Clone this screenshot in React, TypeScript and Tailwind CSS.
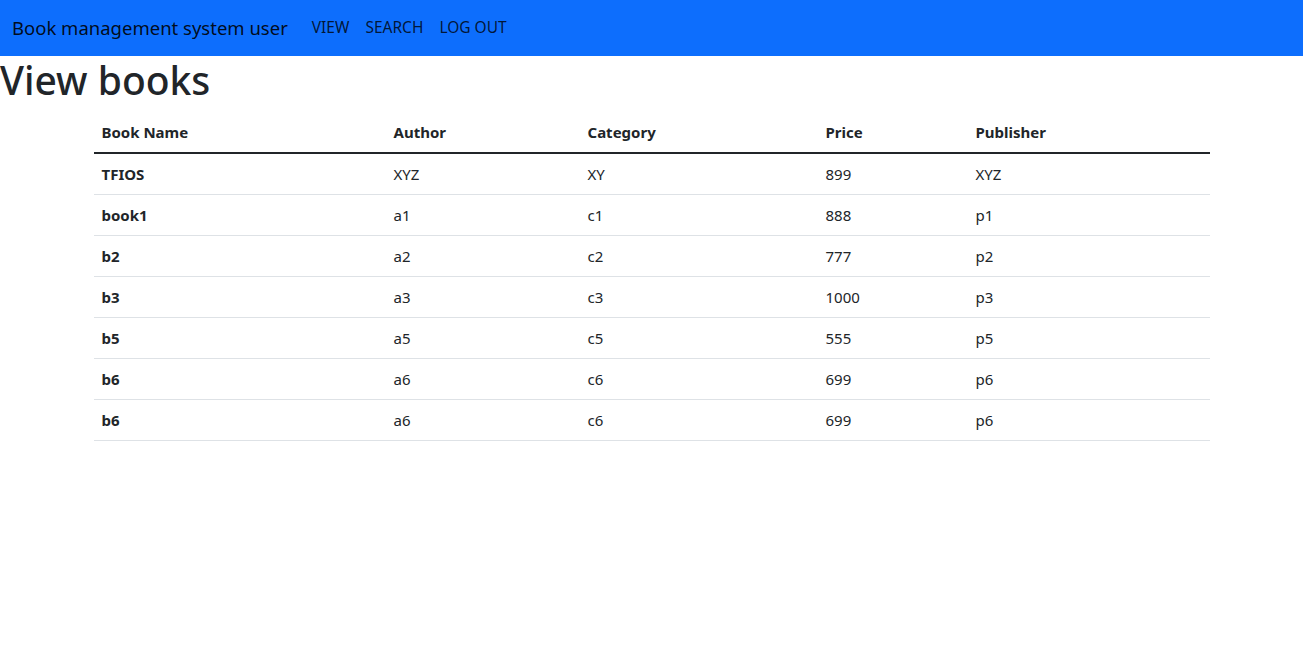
import React from 'react';

type Book = {
  name: string;
  author: string;
  category: string;
  price: string;
  publisher: string;
};

const books: Book[] = [
  { name: 'TFIOS', author: 'XYZ', category: 'XY', price: '899', publisher: 'XYZ' },
  { name: 'book1', author: 'a1', category: 'c1', price: '888', publisher: 'p1' },
  { name: 'b2', author: 'a2', category: 'c2', price: '777', publisher: 'p2' },
  { name: 'b3', author: 'a3', category: 'c3', price: '1000', publisher: 'p3' },
  { name: 'b5', author: 'a5', category: 'c5', price: '555', publisher: 'p5' },
  { name: 'b6', author: 'a6', category: 'c6', price: '699', publisher: 'p6' },
  { name: 'b6', author: 'a6', category: 'c6', price: '699', publisher: 'p6' },
];

const App: React.FC = () => {
  return (
    <div className="min-h-screen bg-white text-[#212529] font-['Noto_Sans',sans-serif] text-[15px]">
      {/* Navbar */}
      <nav className="h-14 bg-[#0d6efd] flex items-center px-3">
        <span className="text-[18.5px] text-black/90 mr-4 leading-[30px]">Book management system user</span>
        <ul className="flex items-center">
          {['VIEW', 'SEARCH', 'LOG OUT'].map((item) => (
            <li key={item}>
              <a href="#" className="block px-2 py-2 text-[15.5px] text-black/80">
                {item}
              </a>
            </li>
          ))}
        </ul>
      </nav>

      <h1 className="text-[39px] font-medium leading-[48px] mb-2">View books</h1>

      {/* Table */}
      <div className="w-[1116px] mx-auto">
        <table className="w-full table-fixed border-collapse">
          <thead>
            <tr className="border-b-2 border-[#212529]">
              <th className="w-[292px] text-left font-bold p-2 leading-6">Book Name</th>
              <th className="w-[194px] text-left font-bold p-2 leading-6">Author</th>
              <th className="w-[238px] text-left font-bold p-2 leading-6">Category</th>
              <th className="w-[150px] text-left font-bold p-2 leading-6">Price</th>
              <th className="text-left font-bold p-2 leading-6">Publisher</th>
            </tr>
          </thead>
          <tbody>
            {books.map((b, i) => (
              <tr key={i} className="border-b border-[#dee2e6]">
                <td className="p-2 leading-6 font-bold">{b.name}</td>
                <td className="p-2 leading-6">{b.author}</td>
                <td className="p-2 leading-6">{b.category}</td>
                <td className="p-2 leading-6">{b.price}</td>
                <td className="p-2 leading-6">{b.publisher}</td>
              </tr>
            ))}
          </tbody>
        </table>
      </div>
    </div>
  );
};

export default App;
